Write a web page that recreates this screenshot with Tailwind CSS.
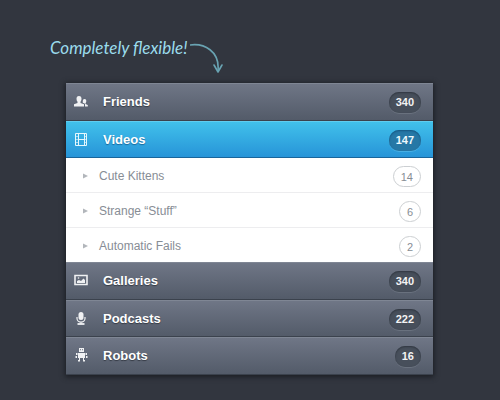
<!DOCTYPE html>
<html lang="en">
  <head>
    <meta charset="UTF-8" />
    <meta name="viewport" content="width=device-width, initial-scale=1.0" />
    <title>Accordion Menu</title>
    <script src="https://cdn.jsdelivr.net/npm/@tailwindcss/browser@4"></script>
  </head>
  <body class="min-h-screen bg-[#32363f] pt-8 pr-[67px] pb-6 pl-[66px] font-['Liberation_Sans',Arial,sans-serif]">
    <header class="-ml-4 flex h-[51px] items-start text-[#9bdcec]">
      <h1 class="whitespace-nowrap font-[Lato,cursive] text-[17px] leading-8 italic">Completely flexible!</h1>
      <svg class="mt-2 ml-0.5 h-9 w-9 text-[#69a3b2]" viewBox="0 0 36 36" fill="none" stroke="currentColor" stroke-width="1.6" stroke-linecap="round" stroke-linejoin="round" aria-hidden="true">
        <path d="M0 5C14 3 30 11 28 31" />
        <path d="M24 25l4 7 4-7" />
      </svg>
    </header>

    <nav class="shadow-[0_1px_5px_1px_#1b1e24]">
      <ul>
        <!-- Friends -->
        <li>
          <a href="#friends" class="flex h-[38px] items-center border-b border-[#3b424d] bg-linear-to-b from-[#707787] to-[#535b69] pt-px pr-3 pl-2 text-white inset-shadow-[0_1px_0_#7f8694]">
            <svg class="h-4 w-4 text-[#f0f1f3]" viewBox="0 0 16 16" fill="currentColor" aria-hidden="true">
              <path d="M5 2C6.800 2 7.500 3.200 7.500 4.800C7.500 6 7 7.200 6.500 7.800V9L10 10.300V12.500H-0.500V10.300L3.500 9V7.800C2.800 7 2.500 6 2.500 4.800C2.500 3.200 3.200 2 5 2Z" />
              <path d="M10.500 5C11.800 5 12.300 5.800 12.300 7C12.300 8 12 8.600 11.500 9.200V10L13.800 11V12.500H11V9.800L8.800 8.800C8.600 6.500 9 5 10.500 5Z" />
            </svg>
            <span class="ml-[13px] flex-1 text-[13px] font-bold text-shadow-[0_1px_1px_#343a44]">Friends</span>
            <span class="mt-px h-[21px] rounded-[10px] bg-[#474f5b] px-[7px] text-[11px] leading-[21px] font-bold text-[#f3f3f4] shadow-[0_1px_0_#69717e] inset-shadow-[0_1px_2px_#303640]">340</span>
          </a>
        </li>

        <!-- Videos, opened -->
        <li>
          <a href="#videos" aria-expanded="true" class="flex h-[37px] items-center border-b border-[#19659b] bg-linear-to-b from-[#42c2eb] to-[#2794d8] pt-px pr-3 pl-2 text-white inset-shadow-[0_1px_0_#60cdf0]">
            <svg class="h-4 w-4" viewBox="0 0 16 16" fill="none" stroke="#e4f7fd" aria-hidden="true">
              <path d="M1.500 1.500h11v12h-11zM4.500 1.500v12M10.500 1.500v12M4.500 7.500h6" />
              <path d="M1.500 4.500h3M1.500 7.500h3M1.500 10.500h3M10.500 4.500h2M10.500 7.500h2M10.500 10.500h2" stroke-opacity=".6" />
            </svg>
            <span class="ml-[13px] flex-1 text-[13px] font-bold text-shadow-[0_1px_1px_#18689c]">Videos</span>
            <span class="mt-px h-[21px] rounded-[10px] bg-[#2678a6] px-[7px] text-[11px] leading-[21px] font-bold text-[#edf8fd] shadow-[0_1px_0_#47afe4] inset-shadow-[0_1px_2px_#155680]">147</span>
          </a>
          <ul class="divide-y divide-[#ededef] bg-white text-xs text-[#878d95]">
            <li>
              <a href="#cute-kittens" class="flex h-[34px] items-center pt-px pr-3 pl-4">
                <svg class="h-[6px] w-[6px]" viewBox="0 0 6 6" fill="#b2b6bb" aria-hidden="true"><path d="M1 0.500L6 3L1 5.500Z" /></svg>
                <span class="ml-[11px] flex-1">Cute Kittens</span>
                <span class="mt-px h-[21px] rounded-full border border-[#cccfd2] px-[7px] text-[11px] leading-[20px]">14</span>
              </a>
            </li>
            <li>
              <a href="#strange-stuff" class="flex h-[34px] items-center pt-px pr-3 pl-4">
                <svg class="h-[6px] w-[6px]" viewBox="0 0 6 6" fill="#b2b6bb" aria-hidden="true"><path d="M1 0.500L6 3L1 5.500Z" /></svg>
                <span class="ml-[11px] flex-1">Strange “Stuff”</span>
                <span class="mt-px h-[21px] rounded-full border border-[#cccfd2] px-[7px] text-[11px] leading-[20px]">6</span>
              </a>
            </li>
            <li>
              <a href="#automatic-fails" class="flex h-[34px] items-center pt-px pr-3 pl-4">
                <svg class="h-[6px] w-[6px]" viewBox="0 0 6 6" fill="#b2b6bb" aria-hidden="true"><path d="M1 0.500L6 3L1 5.500Z" /></svg>
                <span class="ml-[11px] flex-1">Automatic Fails</span>
                <span class="mt-px h-[21px] rounded-full border border-[#cccfd2] px-[7px] text-[11px] leading-[20px]">2</span>
              </a>
            </li>
          </ul>
        </li>

        <!-- Galleries -->
        <li>
          <a href="#galleries" class="flex h-[38px] items-center border-b border-[#3b424d] bg-linear-to-b from-[#707787] to-[#535b69] pt-px pr-3 pl-2 text-white inset-shadow-[0_1px_0_#7f8694]">
            <svg class="h-4 w-4 text-[#f0f1f3]" viewBox="0 0 16 16" fill="none" aria-hidden="true">
              <path d="M1 2.500h12v9h-12z" stroke="currentColor" stroke-width="1.600" />
              <path d="M3 10V8L5 7L7 8L9.500 5.500L11 7V10Z" fill="currentColor" />
              <circle cx="4.500" cy="5" r=".8" fill="currentColor" />
            </svg>
            <span class="ml-[13px] flex-1 text-[13px] font-bold text-shadow-[0_1px_1px_#343a44]">Galleries</span>
            <span class="mt-px h-[21px] rounded-[10px] bg-[#474f5b] px-[7px] text-[11px] leading-[21px] font-bold text-[#f3f3f4] shadow-[0_1px_0_#69717e] inset-shadow-[0_1px_2px_#303640]">340</span>
          </a>
        </li>

        <!-- Podcasts -->
        <li>
          <a href="#podcasts" class="flex h-[37px] items-center border-b border-[#3b424d] bg-linear-to-b from-[#707787] to-[#535b69] pt-px pr-3 pl-2 text-white inset-shadow-[0_1px_0_#7f8694]">
            <svg class="h-4 w-4 text-[#f0f1f3]" viewBox="0 0 16 16" fill="none" stroke="currentColor" aria-hidden="true">
              <rect x="4.500" y="1" width="5" height="8" rx="2.500" fill="currentColor" stroke="none" />
              <path d="M3 6v1.500a4 3.500 0 0 0 8 0V6M7 11v2" stroke-width="1.200" />
              <path d="M3.500 13h7" stroke-width="1.800" />
            </svg>
            <span class="ml-[13px] flex-1 text-[13px] font-bold text-shadow-[0_1px_1px_#343a44]">Podcasts</span>
            <span class="mt-px h-[21px] rounded-[10px] bg-[#474f5b] px-[7px] text-[11px] leading-[21px] font-bold text-[#f3f3f4] shadow-[0_1px_0_#69717e] inset-shadow-[0_1px_2px_#303640]">222</span>
          </a>
        </li>

        <!-- Robots -->
        <li>
          <a href="#robots" class="flex h-[38px] items-center border-b border-[#3b424d] bg-linear-to-b from-[#707787] to-[#535b69] pt-px pr-3 pl-2 text-white inset-shadow-[0_1px_0_#7f8694]">
            <svg class="h-4 w-4 text-[#f0f1f3]" viewBox="0 0 16 16" fill="currentColor" aria-hidden="true">
              <path fill-rule="evenodd" d="M5 0h5v4h-5zM6 1.300v1h1v-1zM8 1.300v1h1v-1z" />
              <path d="M4 5h7v5h-7zM2 5h1.500v2h-1.500zM11.500 5h1.500v2h-1.500zM1.500 8h1.500v2h-1.500zM12 8h1.500v2h-1.500zM5 10h1v2h-1zM9 10h1v2h-1zM4 12h2v1.500h-2zM9 12h2v1.500h-2z" />
            </svg>
            <span class="ml-[13px] flex-1 text-[13px] font-bold text-shadow-[0_1px_1px_#343a44]">Robots</span>
            <span class="mt-px h-[21px] rounded-[10px] bg-[#474f5b] px-[7px] text-[11px] leading-[21px] font-bold text-[#f3f3f4] shadow-[0_1px_0_#69717e] inset-shadow-[0_1px_2px_#303640]">16</span>
          </a>
        </li>
      </ul>
    </nav>
  </body>
</html>
